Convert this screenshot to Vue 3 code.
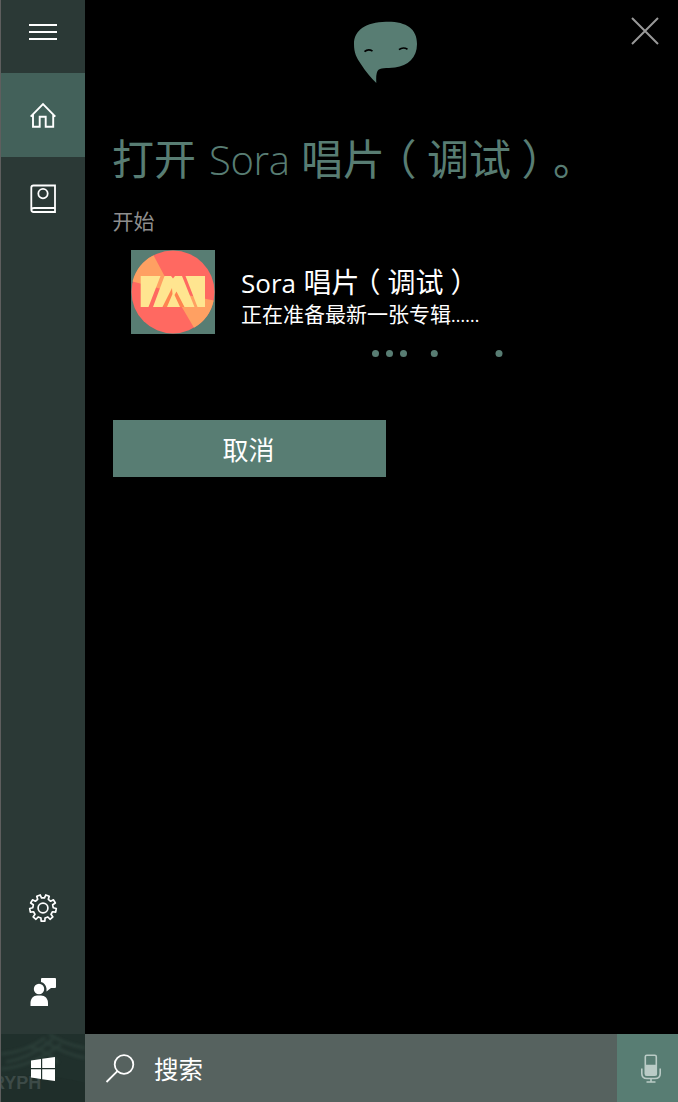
<script setup>
const dots = [4.5, 18.5, 32.5, 63.3, 128]
const teeth = 9
const gear = (() => {
  const pts = []
  const ring = [[-0.29, 10.2], [-0.2, 13.3], [0.2, 13.3], [0.29, 10.2]]
  for (let i = 0; i < teeth; i++) {
    const base = (i / teeth) * Math.PI * 2 - Math.PI / 2 + Math.PI / teeth
    for (const [f, r] of ring) {
      const a = base + f * ((Math.PI * 2) / teeth)
      pts.push(`${(15 + r * Math.cos(a)).toFixed(2)},${(15 + r * Math.sin(a)).toFixed(2)}`)
    }
  }
  return pts.join(' ')
})()
</script>

<template>
  <div class="shell">
    <div class="upper">
      <nav class="rail">
        <div class="cell menu">
          <svg width="30" height="20" viewBox="0 0 30 20"><path d="M1 2h28M1 9h28M1 16h28" stroke="#fff" stroke-width="2" /></svg>
        </div>
        <div class="cell active">
          <svg width="30" height="30" viewBox="0 0 30 30" fill="none" stroke="#fff" stroke-width="1.9">
            <path d="M2.700 16.600L15 4.200l12.300 12.400M5 14.400v12.300h6.700V16.800h6v9.900H25.200V14.400" />
          </svg>
        </div>
        <div class="cell">
          <svg width="30" height="30" viewBox="0 0 30 30" fill="none" stroke="#fff" stroke-width="1.8">
            <path d="M27 1.500H5.500Q3.300 1.500 3.300 3.700V25.500Q3.300 28 5.700 28H27ZM3.500 25.500Q3.800 24 6 24H27" />
            <circle cx="15" cy="9.600" r="4.700" />
          </svg>
        </div>
        <div class="spacer"></div>
        <div class="cell">
          <svg width="30" height="30" viewBox="0 0 30 30" fill="none" stroke="#fff" stroke-width="1.7" stroke-linejoin="round">
            <polygon :points="gear" />
            <circle cx="15" cy="15" r="4.900" />
          </svg>
        </div>
        <div class="cell">
          <svg width="30" height="30" viewBox="0 0 30 30" fill="#fff">
            <circle cx="11" cy="12" r="5.200" />
            <path d="M2.500 29V26C2.500 21.500 5.500 18.500 9 18.500H13C17 18.500 20 21.500 20 26V29Z" />
            <path d="M14 1H27Q28 1 28 2V10Q28 11 27 11H23L18.500 14.500V11.500Q17.500 6 13 5V2Q13 1 14 1Z" />
          </svg>
        </div>
      </nav>

      <main class="panel">
        <header class="top">
          <svg class="face" width="66" height="64" viewBox="0 0 66 64">
            <path d="M33 .8C53 .300 64 7.500 64 23C64 37 55 44.500 42 46.500C33 47.800 27 46 24.500 50Q22.800 53 23.300 62C18 57 13 51 7.500 42.500C3.500 36.500 1 32 1 23C1 9 13 1.300 33 .8Z" fill="#587d73" />
            <path d="M11.500 30.700Q15 27.300 19.500 30M46 28.700Q50 25.500 54.500 28.300" fill="none" stroke="#000" stroke-width="1.700" />
          </svg>
          <svg class="close" width="28" height="28" viewBox="0 0 28 28"><path d="M1 1L27 27M27 1L1 27" stroke="#999" stroke-width="2" /></svg>
        </header>

        <h1>打开<span class="latin">Sora</span>唱片<span class="paren">（</span>调试<span class="paren">）</span>。</h1>
        <p class="label">开始</p>

        <section class="item">
          <svg class="cover" width="84" height="84" viewBox="0 0 84 84">
            <rect width="84" height="84" fill="#587d73" />
            <circle cx="42" cy="42" r="41.500" fill="#ff6961" />
            <path d="M42 42L22.500 5.300A41.500 41.500 0 0 0 1.500 31.500ZM42 42L82.700 50.500A41.500 41.500 0 0 1 63 77.800Z" fill="#ffa062" />
            <path d="M32 57L44 28L62 57Z" fill="#ff8550" />
            <path d="M9.700 26H29.500L17.500 57H9.700ZM33.500 26H40L42 28.500L44 26H51L63.500 57H53.500L45.500 41.500L43.500 45L49 57H36L41.500 44L41 38L31.500 57H22ZM54.500 26H74V57H66.500Z" fill="#ffe590" />
          </svg>
          <div class="words">
            <h2><span class="latin">Sora</span>唱片<span class="paren">（</span>调试<span class="paren">）</span></h2>
            <p>正在准备最新一张专辑<span class="ellipsis">......</span></p>
          </div>
        </section>

        <svg class="progress" width="140" height="8" viewBox="0 0 140 8">
          <circle v-for="x in dots" :key="x" :cx="x" cy="4.5" r="3.500" fill="#587d73" />
        </svg>

        <button class="cancel">取消</button>
      </main>
    </div>

    <footer class="taskbar">
      <div class="start">
        <svg width="84" height="68" viewBox="0 0 84 68">
          <defs><filter id="soft"><feGaussianBlur stdDeviation="1.5" /></filter></defs>
          <rect width="84" height="68" fill="#20302c" />
          <g fill="none" stroke="#3a5148" stroke-width="3" opacity=".4" filter="url(#soft)">
            <path d="M0 20Q25 18 44 4M5 28Q30 24 52 5M0 35Q32 32 60 10M28 13Q46 16 57 29M48 0Q62 10 84 14M44 8Q64 20 84 24" />
          </g>
          <path d="M0 45Q32 36 84 49V68H0Z" fill="#1d2b28" opacity=".5" />
          <text x="-9" y="55" class="wall">RYPH</text>
          <path d="M30 26.500L40 25V34H30ZM41.200 24.800L54 23V34H41.200ZM30 35.200H40V45L30 43.500ZM41.200 35.200H54V47L41.200 45.200Z" fill="#fff" />
        </svg>
      </div>
      <div class="search">
        <svg width="30" height="30" viewBox="0 0 30 30" fill="none" stroke="#fff" stroke-width="1.800"><circle cx="19" cy="11.500" r="9.300" /><path d="M12.400 18.100L1.500 29" /></svg>
        <span>搜索</span>
      </div>
      <div class="mic">
        <svg width="22" height="30" viewBox="0 0 22 30" fill="none" stroke="#bacbc6" stroke-width="1.600">
          <rect x="5.300" y="2.300" width="11" height="20" rx="1.500" />
          <path d="M6 12.500H16V21.500H6Z" fill="#bacbc6" />
          <path d="M1.800 15.500V20.500Q1.800 25.500 7 25.500H15Q20.200 25.500 20.200 20.500V15.500M11 25.500V28.500M6.500 29H15.500" />
        </svg>
      </div>
    </footer>
  </div>
</template>

<style>
body { background: #000; }
</style>

<style scoped>
* { box-sizing: border-box; }
.shell { display: flex; flex-direction: column; width: 678px; height: 1102px; overflow: hidden; background: #000; border-left: 1px solid #5e5e5e; font-family: "Noto Sans CJK SC", sans-serif; color: #fff; text-spacing-trim: space-all; }
h1, h2, p { margin: 0; font-weight: 400; white-space: nowrap; }
svg { display: block; flex: none; }
.upper { display: flex; height: 1034px; }
.rail { display: flex; flex-direction: column; width: 84px; background: #2b3936; }
.cell { display: flex; align-items: center; justify-content: center; height: 84px; }
.menu { height: 73px; padding-bottom: 7px; }
.active { background: #43615a; }
.spacer { flex: 1; }
.panel { flex: 1; padding: 0 0 0 28px; }
.top { display: flex; justify-content: space-between; padding: 17px 19px 0 240px; height: 127px; }
.face { margin-top: 4px; }
h1 { font-size: 42px; line-height: 60px; height: 60px; margin-left: -1px; color: #587d73; }
.latin { display: inline-block; font-family: "Open Sans", "Noto Sans", sans-serif; line-height: 1; }
h1 .latin { width: 105px; padding-left: 13px; font-size: 40px; font-weight: 300; letter-spacing: -.4px; }
.paren { display: inline-block; width: 1em; line-height: 1; text-align: center; font-feature-settings: "halt"; }
.label { margin: 18px 0 0 -.5px; font-size: 21px; line-height: 30px; color: #8e8e8e; }
.item { display: flex; margin: 15px 0 0 18px; height: 84px; }
.words { padding: 15px 0 0 26px; }
h2 { font-size: 28px; line-height: 32px; height: 32px; }
h2 .latin { width: 62.5px; font-size: 26px; }
.words p { font-size: 21px; line-height: 32px; }
.ellipsis { font-family: "Noto Sans", sans-serif; font-size: 17px; line-height: 1; letter-spacing: .2px; }
.progress { margin: 15px 0 0 258px; }
.cancel { display: block; width: 273px; height: 57px; margin-top: 63px; padding: 0 2px 0 0; border: 0; background: #587d73; color: #fff; font: 400 26px/57px "Noto Sans CJK SC", sans-serif; }
.taskbar { display: flex; height: 68px; }
.start { width: 84px; overflow: hidden; }
.wall { font: 700 18px "Liberation Sans", sans-serif; fill: #3c4a47; }
.search { flex: 1; display: flex; align-items: center; gap: 19px; padding-left: 20px; background: #56625f; font-size: 24.5px; }
.mic { display: flex; align-items: center; justify-content: center; width: 61px; padding-left: 7px; background: #587d73; }
</style>
